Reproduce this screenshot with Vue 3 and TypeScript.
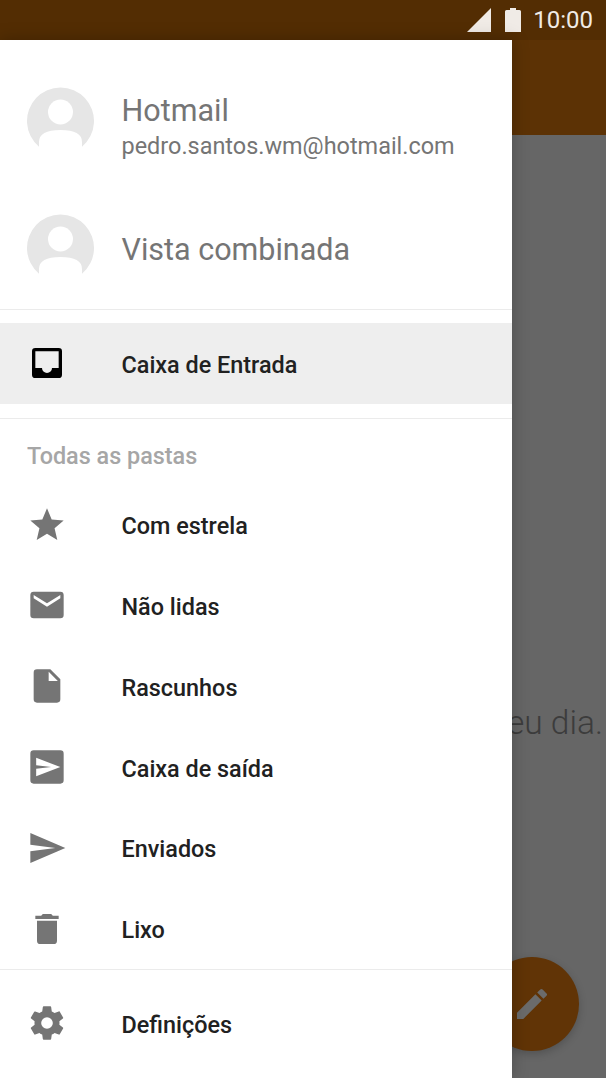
<template>
  <div class="screen">
    <header class="status-bar">
      <svg class="signal" viewBox="0 0 24 24" width="24" height="24"><path d="M0 24 24 0v24z" /></svg>
      <svg class="battery" viewBox="0 0 16 24" width="16" height="24"><path d="M5 0h6v2h3.500q1.500 0 1.500 1.500V24H0V3.500Q0 2 1.500 2H5z" /></svg>
      <span class="clock">10:00</span>
    </header>
    <div class="app-bar"></div>
    <main class="content">
      <p class="empty">eu dia.</p>
      <button class="fab" type="button" aria-label="Escrever">
        <svg viewBox="0 0 24 24" width="40" height="40"><path d="M3 17.250V21h3.750L17.810 9.940l-3.750-3.750zM20.710 7.040a1 1 0 0 0 0-1.410l-2.340-2.340a1 1 0 0 0-1.410 0l-1.830 1.830 3.750 3.750z" /></svg>
      </button>
    </main>

    <nav class="drawer">
      <section class="accounts">
        <div v-for="account in accounts" :key="account.name" class="account">
          <svg class="avatar" viewBox="0 0 67 67" width="67" height="67">
            <path d="M12 59.700A33.500 33.500 0 1 1 55 59.700V55Q55 43 33.500 43T12 55z" />
            <circle cx="33.500" cy="25" r="12.500" fill="#fff" />
          </svg>
          <div class="account-text" :class="{ 'two-line': account.email }">
            <div class="account-name">{{ account.name }}</div>
            <div v-if="account.email" class="account-email">{{ account.email }}</div>
          </div>
        </div>
      </section>

      <div class="divider first"></div>
      <a class="row active">
        <svg class="icon" viewBox="0 0 24 24" width="40" height="40"><path fill="#000" d="M5 3a2 2 0 0 0-2 2v14a2 2 0 0 0 2 2h14a2 2 0 0 0 2-2V5a2 2 0 0 0-2-2zm0 2h14v10h-4a3 3 0 0 1-6 0H5z" /></svg>
        <span>Caixa de Entrada</span>
      </a>
      <div class="divider second"></div>
      <div class="group-title">Todas as pastas</div>

      <a v-for="folder in folders" :key="folder.label" class="row">
        <svg class="icon" viewBox="0 0 24 24" width="40" height="40"><path :d="folder.icon" fill-rule="evenodd" /></svg>
        <span>{{ folder.label }}</span>
      </a>

      <div class="divider third"></div>
      <a class="row settings">
        <svg class="icon" viewBox="0 0 24 24" width="40" height="40"><path :d="gearIcon" fill-rule="evenodd" /></svg>
        <span>Definições</span>
      </a>
    </nav>
  </div>
</template>

<script setup lang="ts">
type Account = {
  name: string;
  email?: string;
};

type Folder = {
  label: string;
  icon: string;
};

const accounts: Account[] = [
  { name: "Hotmail", email: "pedro.santos.wm@hotmail.com" },
  { name: "Vista combinada" },
];

const folders: Folder[] = [
  { label: "Com estrela", icon: "M12 17.270 18.180 21l-1.640-7.030L22 9.240l-7.190-.610L12 2 9.190 8.630 2 9.240l5.460 4.730L5.820 21z" },
  { label: "Não lidas", icon: "M4 4h16a2 2 0 0 1 2 2v12a2 2 0 0 1-2 2H4a2 2 0 0 1-2-2V6a2 2 0 0 1 2-2zm16 4V6l-8 5-8-5v2l8 5z" },
  { label: "Rascunhos", icon: "M6 2a2 2 0 0 0-2 2v16a2 2 0 0 0 2 2h12a2 2 0 0 0 2-2V8l-6-6zm7 7V3.500L18.500 9z" },
  { label: "Caixa de saída", icon: "M4 2h16a2 2 0 0 1 2 2v16a2 2 0 0 1-2 2H4a2 2 0 0 1-2-2V4a2 2 0 0 1 2-2zm1.500 4.500v4.500l9 1-9 1v4.500L20 12z" },
  { label: "Enviados", icon: "M2.010 21 23 12 2.010 3 2 10l15 2-15 2z" },
  { label: "Lixo", icon: "M6 19a2 2 0 0 0 2 2h8a2 2 0 0 0 2-2V7H6zM19 4h-3.500l-1-1h-5l-1 1H5v2h14z" },
];

const gearIcon = "M19.430 12.980c.040-.320.070-.640.070-.980s-.030-.660-.070-.980l2.110-1.650c.190-.150.240-.420.120-.640l-2-3.460c-.120-.220-.390-.300-.610-.220l-2.490 1c-.520-.400-1.080-.730-1.690-.980l-.380-2.650A.488.488 0 0 0 14 2h-4c-.250 0-.460.180-.490.420l-.380 2.650c-.610.250-1.170.590-1.690.980l-2.490-1a.566.566 0 0 0-.610.220l-2 3.460c-.130.220-.070.490.120.640l2.110 1.650c-.040.320-.070.650-.070.980s.030.660.070.980l-2.110 1.650c-.190.150-.240.420-.120.640l2 3.460c.120.220.390.300.610.220l2.490-1c.520.400 1.080.730 1.690.980l.380 2.650c.030.240.240.420.490.420h4c.250 0 .460-.180.490-.420l.380-2.650c.610-.250 1.170-.590 1.690-.980l2.490 1c.230.090.490 0 .610-.220l2-3.460c.120-.220.070-.490-.120-.640zM12 15.500a3.500 3.500 0 1 1 0-7 3.500 3.500 0 0 1 0 7z";
</script>

<style>
html,
body {
  margin: 0;
  background: #666;
}
</style>

<style scoped>
.screen {
  position: relative;
  display: flex;
  flex-direction: column;
  width: 606px;
  height: 1078px;
  overflow: hidden;
  background: #666;
  font-family: Roboto, "Liberation Sans", sans-serif;
}

.status-bar {
  display: flex;
  flex: none;
  align-items: center;
  justify-content: flex-end;
  height: 40px;
  padding-right: 13px;
  box-sizing: border-box;
  background: #532d03;
  color: #f0ebe6;
}

.signal {
  margin-right: 14px;
  fill: #f0ebe6;
}

.battery {
  margin-right: 12px;
  fill: #f0ebe6;
}

.clock {
  font-size: 24px;
  line-height: 40px;
}

.app-bar {
  flex: none;
  height: 95px;
  background: #5c3205;
}

.content {
  position: relative;
  flex: 1;
  background: #666;
}

.empty {
  position: absolute;
  top: 568px;
  right: 3px;
  margin: 0;
  color: #3c3c3c;
  font-size: 33.500px;
  font-weight: 300;
  line-height: 40px;
}

.fab {
  position: absolute;
  top: 822px;
  left: 485px;
  display: flex;
  align-items: center;
  justify-content: center;
  width: 94px;
  height: 94px;
  padding: 0;
  border: 0;
  border-radius: 50%;
  background: #613406;
  box-shadow: 0 3px 8px rgba(0, 0, 0, 0.2);
}

.fab svg {
  fill: #6b6b6b;
}

.drawer {
  position: absolute;
  top: 40px;
  bottom: 0;
  left: 0;
  width: 512px;
  background: #fff;
  box-shadow: 0 0 16px rgba(0, 0, 0, 0.25);
}

.accounts {
  display: flex;
  flex-direction: column;
  gap: 60px;
  padding: 47px 0 0 27px;
}

.account {
  display: flex;
  align-items: center;
  gap: 27.500px;
  height: 67px;
}

.avatar {
  flex: none;
  fill: #e6e6e6;
}

.account-text {
  padding-top: 4px;
}

.account-text.two-line {
  padding-top: 12px;
}

.account-name {
  color: #757575;
  font-size: 30.500px;
  line-height: 38px;
}

.account-email {
  color: #757575;
  font-size: 23.450px;
  line-height: 32px;
}

.divider {
  height: 1px;
  background: #ebebeb;
}

.divider.first {
  margin-top: 28px;
  margin-bottom: 13px;
}

.divider.second {
  margin-top: 14px;
}

.divider.third {
  margin-top: -0.300px;
}

.group-title {
  height: 65.500px;
  padding-left: 27px;
  color: #a6a6a6;
  font-size: 23.400px;
  font-weight: 500;
  line-height: 75px;
}

.row {
  display: flex;
  align-items: center;
  height: 80.800px;
  padding-left: 27px;
  color: #212121;
  font-size: 23.400px;
  font-weight: 500;
}

.row span {
  padding-top: 3px;
}

.row .icon {
  flex: none;
  margin-right: 54.500px;
  fill: #757575;
}

.row.active {
  background: #eee;
}

.row.settings {
  height: 107px;
}
</style>
